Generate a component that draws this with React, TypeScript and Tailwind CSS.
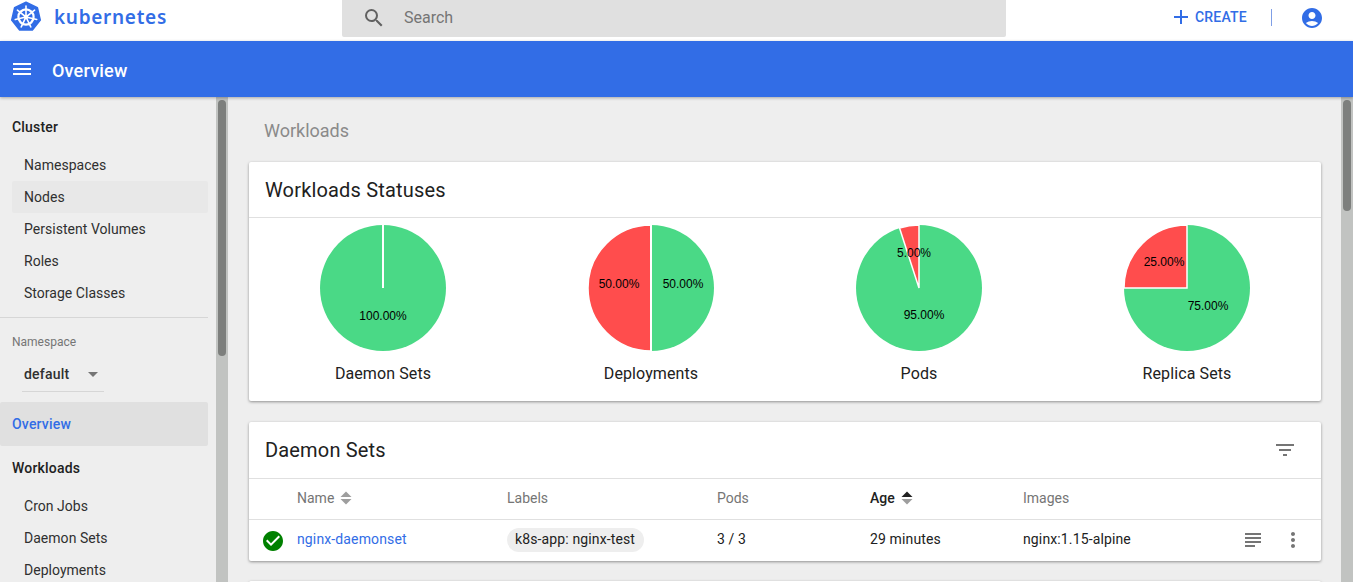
import { MdAccountCircle, MdAdd, MdArrowDropDown, MdCheckCircle, MdFilterList, MdMenu, MdMoreVert, MdSearch, MdSubject } from "react-icons/md";

const green = "#4ad986";
const red = "#ff4d4d";

function slicePoint(percent: number) {
  const angle = (percent / 100) * Math.PI * 2;
  return `${(64 + 63 * Math.sin(angle)).toFixed(2)} ${(64 - 63 * Math.cos(angle)).toFixed(2)}`;
}

// redPercent is drawn counter-clockwise from twelve o'clock, the rest is green
function Pie({ redPercent, labels, title }: { redPercent: number; labels: { text: string; x: number; y: number }[]; title: string }) {
  const start = 100 - redPercent;
  return (
    <div className="flex flex-col items-center">
      <svg width="128" height="128" viewBox="0 0 128 128" className="block">
        <circle cx="64" cy="64" r="63" fill={green} />
        {redPercent > 0 && (
          <path d={`M64 64L${slicePoint(start)}A63 63 0 ${redPercent > 50 ? 1 : 0} 1 64 1Z`} fill={red} stroke="#fff" strokeWidth="1.5" />
        )}
        {redPercent === 0 && <line x1="64" y1="64" x2="64" y2="0" stroke="#fff" strokeWidth="2" />}
        {redPercent === 50 && <line x1="64" y1="0" x2="64" y2="128" stroke="#fff" strokeWidth="2" />}
        {labels.map((l) => (
          <text key={l.text} x={l.x} y={l.y} textAnchor="middle" fontSize="12" fontFamily="'Liberation Sans', sans-serif" fill="#000">
            {l.text}
          </text>
        ))}
      </svg>
      <div className="mt-[12px] text-base leading-5 tracking-[0.1px] text-[#212121]">{title}</div>
    </div>
  );
}

function SortArrows({ active }: { active?: boolean }) {
  return (
    <svg width="12" height="16" viewBox="0 0 12 16" className="ml-[6px]">
      <path d="M.5 7L6 1.5 11.5 7z" fill={active ? "#212121" : "#9e9e9e"} />
      <path d="M.5 9L6 14.5 11.5 9z" fill="#9e9e9e" />
    </svg>
  );
}

function Logo() {
  const spokes = [0, 51.4, 102.8, 154.3, 205.7, 257.1, 308.6];
  return (
    <svg width="32" height="32" viewBox="0 0 32 32" className="block">
      <path d="M16 1.2l11.4 5.5 2.9 12.4-7.9 9.9H9.6L1.7 19.1 4.6 6.7z" fill="#326de6" stroke="#326de6" strokeWidth="1.5" strokeLinejoin="round" />
      <circle cx="16" cy="16" r="7.6" fill="none" stroke="#fff" strokeWidth="2.2" />
      <circle cx="16" cy="16" r="2.2" fill="#fff" />
      {spokes.map((a) => (
        <line key={a} x1="16" y1="16" x2="16" y2="5" stroke="#fff" strokeWidth="1.6" strokeLinecap="round" transform={`rotate(${a} 16 16)`} />
      ))}
    </svg>
  );
}

function NavItem({ label, selected }: { label: string; selected?: boolean }) {
  return (
    <div className={`ml-3 mr-2 flex h-8 items-center rounded-[2px] pl-3 text-sm tracking-[0.03px] text-[#303030] ${selected ? "bg-[#e8e8e8]" : ""}`}>
      {label}
    </div>
  );
}

function Sidebar() {
  return (
    <aside className="w-[216px] shrink-0 overflow-hidden pt-[8px]">
      <div className="flex h-11 items-center pl-3 text-sm font-medium tracking-[0.2px] text-[#212121]">Cluster</div>
      <div>
        <NavItem label="Namespaces" />
        <NavItem label="Nodes" selected />
        <NavItem label="Persistent Volumes" />
        <NavItem label="Roles" />
        <NavItem label="Storage Classes" />
      </div>
      <div className="mr-2 mt-[8px] border-t border-[#d6d6d6]" />
      <div className="pl-3 pt-[16px] text-xs leading-4 text-[#757575]">Namespace</div>
      <div className="ml-[22px] mt-[8px] flex h-[34px] w-[82px] items-center justify-between border-b border-[#d6d6d6] pl-[2px] text-sm font-medium tracking-[0.2px] text-[#303030]">
        <span className="mb-[2px]">default</span>
        <MdArrowDropDown size={24} className="-mr-[1px] mb-[1px] text-[#757575]" />
      </div>
      <div className="mr-2 mt-[10px] flex h-11 items-center rounded-[2px] bg-[#e0e0e0] pl-3 text-sm font-medium tracking-[0.2px] text-[#326de6]">Overview</div>
      <div className="flex h-11 items-center pl-3 text-sm font-medium tracking-[0.2px] text-[#212121]">Workloads</div>
      <NavItem label="Cron Jobs" />
      <NavItem label="Daemon Sets" />
      <NavItem label="Deployments" />
    </aside>
  );
}

function Scrollbar({ thumb }: { thumb: string }) {
  return (
    <div className="w-3 shrink-0 bg-[#c1c3c1] px-[2px] pt-[3px]">
      <div className={`w-2 rounded-full bg-[#7d7f7d] ${thumb}`} />
    </div>
  );
}

export default function App() {
  return (
    <div className="flex h-[582px] flex-col overflow-hidden bg-[#eeeeee] font-['Roboto',sans-serif]">
      <header className="flex h-[41px] shrink-0 items-start bg-white">
        <div className="flex w-[342px] shrink-0 items-center pl-[10px] pt-[1px]">
          <Logo />
          <span className="ml-[12px] font-['Noto_Sans',sans-serif] text-[19px] font-semibold leading-8 tracking-[0.7px] text-[#326de6]">kubernetes</span>
        </div>
        <div className="flex h-[37px] w-[664px] shrink-0 items-center rounded-b-[2px] bg-[#e0e0e0] pb-[2px] pl-5 text-base text-[#757575]">
          <MdSearch size={24} className="text-[#616161]" />
          <span className="ml-[18px]">Search</span>
        </div>
        <div className="flex flex-1 items-center pl-[163px] pt-[4px]">
          <MdAdd size={24} className="text-[#326de6]" />
          <span className="ml-[2px] text-sm font-medium tracking-[0.2px] text-[#326de6]">CREATE</span>
          <div className="ml-[24px] h-[17px] w-px bg-[#7f9fe6]" />
          <MdAccountCircle size={24} className="ml-[28px] mt-[2px] text-[#326de6]" />
        </div>
      </header>
      <div className="z-10 flex h-14 shrink-0 items-center bg-[#326de6] pl-[10px] text-white shadow-[0_1px_3px_rgba(0,0,0,0.3)]">
        <MdMenu size={24} />
        <span className="ml-[18px] pt-[2px] text-[18px] font-medium tracking-[0.2px]">Overview</span>
      </div>
      <div className="flex min-h-0 flex-1">
        <Sidebar />
        <Scrollbar thumb="h-[256px]" />
        <main className="min-w-0 flex-1 overflow-hidden pl-[21px] pr-5">
          <h1 className="flex h-[65px] items-center pl-[15px] pt-[2px] text-lg font-normal text-[#8a8a8a]">Workloads</h1>
          <section className="rounded-[2px] bg-white shadow-[0_1px_3px_rgba(0,0,0,0.4)]">
            <div className="flex h-[56px] items-center border-b border-[#e0e0e0] px-4 pt-[1px] text-xl tracking-[0.17px] text-[#212121]">Workloads Statuses</div>
            <div className="grid h-[183px] grid-cols-4 pt-[6px]">
              <Pie title="Daemon Sets" redPercent={0} labels={[{ text: "100.00%", x: 64, y: 96 }]} />
              <Pie title="Deployments" redPercent={50} labels={[{ text: "50.00%", x: 32, y: 64 }, { text: "50.00%", x: 96, y: 64 }]} />
              <Pie title="Pods" redPercent={5} labels={[{ text: "5.00%", x: 59, y: 33 }, { text: "95.00%", x: 69, y: 95 }]} />
              <Pie title="Replica Sets" redPercent={25} labels={[{ text: "25.00%", x: 41, y: 42 }, { text: "75.00%", x: 85, y: 86 }]} />
            </div>
          </section>
          <section className="mt-[21px] rounded-[2px] bg-white shadow-[0_1px_3px_rgba(0,0,0,0.4)]">
            <div className="flex h-[57px] items-center justify-between border-b border-[#e0e0e0] pl-4 pr-6 text-xl tracking-[0.17px] text-[#212121]">
              <span>Daemon Sets</span>
              <MdFilterList size={24} className="text-[#757575]" />
            </div>
            <div className="grid h-[41px] grid-cols-[48px_210px_210px_153px_153px_1fr] items-center border-b border-[#e0e0e0] pb-[2px] text-sm text-[#757575]">
              <div />
              <div className="flex items-center">Name<SortArrows /></div>
              <div>Labels</div>
              <div>Pods</div>
              <div className="flex items-center font-medium text-[#212121]">Age<SortArrows active /></div>
              <div>Images</div>
            </div>
            <div className="grid h-[41px] grid-cols-[48px_210px_210px_153px_153px_1fr] items-center pb-[1px] text-sm tracking-[0.13px] text-[#212121]">
              <div className="pl-3"><MdCheckCircle size={24} className="mt-[1px] text-[#008000]" /></div>
              <div className="pb-[2px] text-[#326de6]">nginx-daemonset</div>
              <div><span className="inline-block h-6 rounded-xl bg-[#eeeeee] pl-2 pr-[9px] leading-[23px]">k8s-app: nginx-test</span></div>
              <div className="pb-[2px]">3 / 3</div>
              <div className="pb-[2px]">29 minutes</div>
              <div className="flex items-center justify-between pr-4">
                <span className="pb-[2px]">nginx:1.15-alpine</span>
                <span className="flex items-center gap-4 text-[#757575]">
                  <MdSubject size={24} />
                  <MdMoreVert size={24} />
                </span>
              </div>
            </div>
          </section>
          <section className="mt-[20px] h-10 rounded-[2px] bg-white shadow-[0_1px_3px_rgba(0,0,0,0.4)]" />
        </main>
        <Scrollbar thumb="h-[111px]" />
      </div>
    </div>
  );
}
